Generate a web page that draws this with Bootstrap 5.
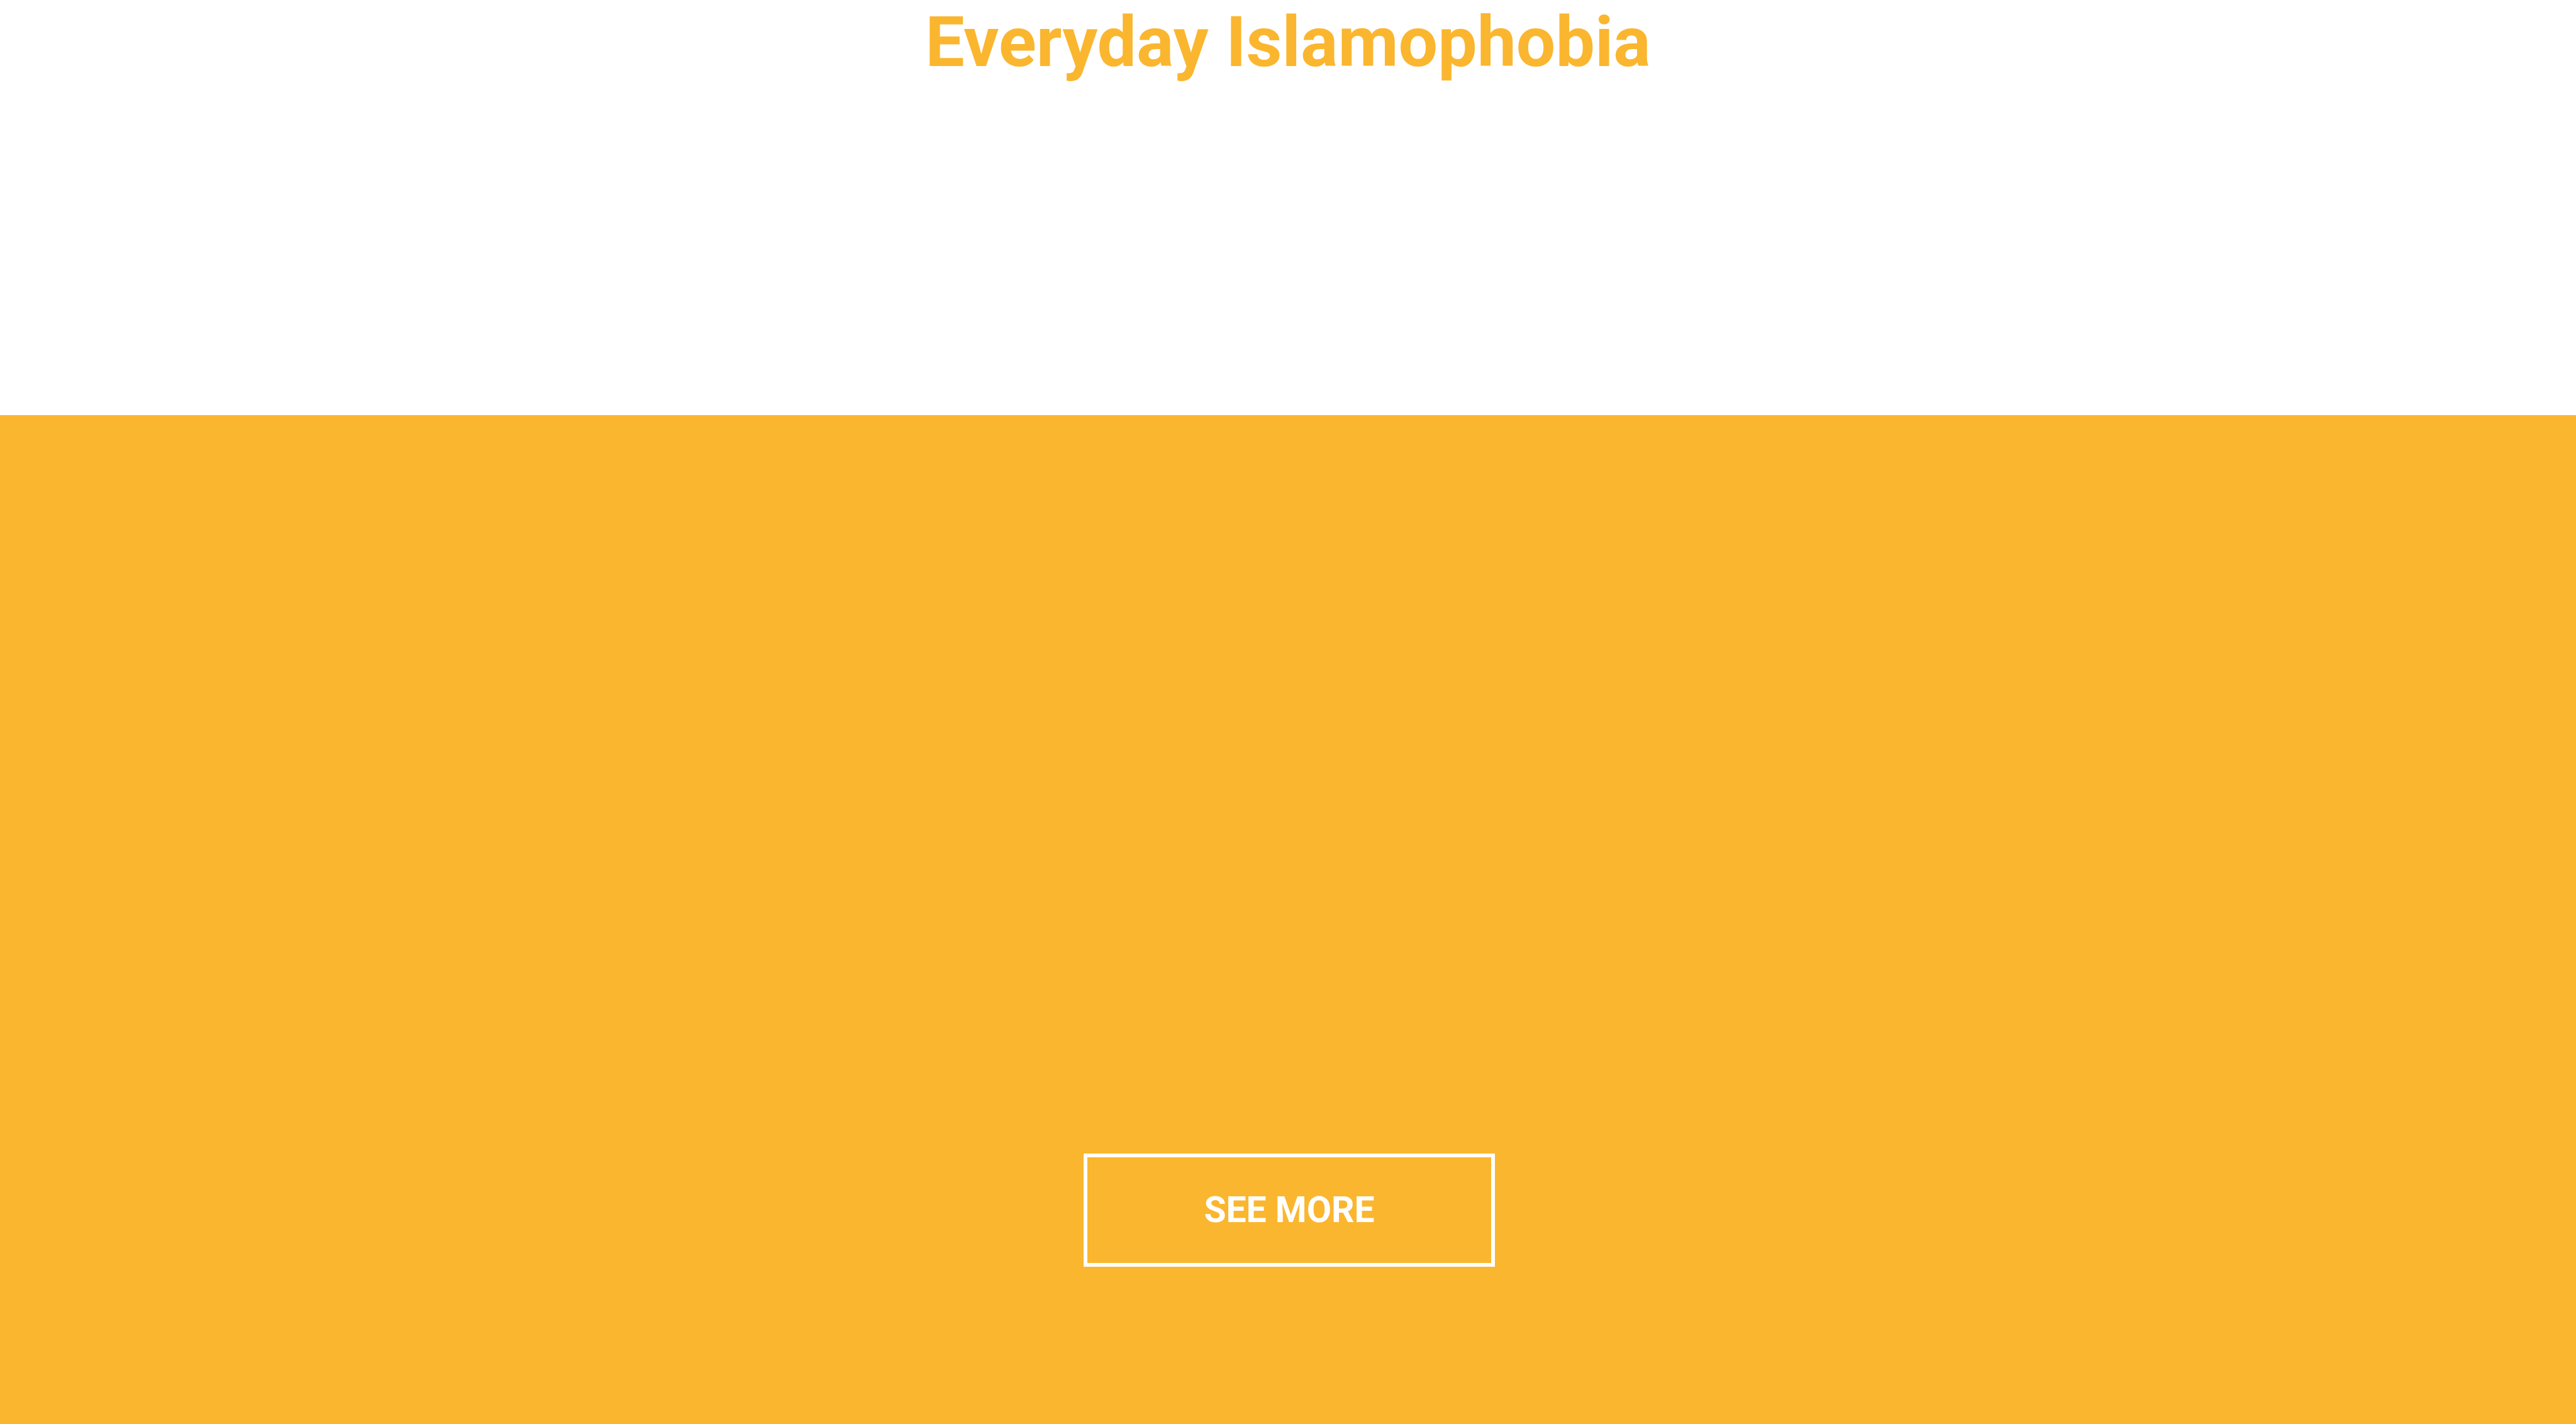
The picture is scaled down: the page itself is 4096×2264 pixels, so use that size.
<!DOCTYPE html>
<html lang="en">
<head>
<meta charset="utf-8">
<meta name="viewport" content="width=device-width, initial-scale=1">
<title>Everyday Islamophobia</title>
<link rel="stylesheet" href="https://cdn.jsdelivr.net/npm/bootstrap@5.3.0/dist/css/bootstrap.min.css">
<style>
:root { --brand: #fbb62f; }
body { font-family: Roboto, "Liberation Sans", sans-serif; }
.page-title { color: var(--brand); font-size: 111px; line-height: 134px; }
.page-head { padding-bottom: 526px; }
.brand-band { background-color: var(--brand); padding-bottom: 250px; }
.btn-more {
  --bs-btn-color: #fff;
  --bs-btn-border-color: #fff;
  --bs-btn-hover-color: var(--brand);
  --bs-btn-hover-bg: #fff;
  --bs-btn-hover-border-color: #fff;
  --bs-btn-border-width: 6px;
  --bs-btn-font-size: 57px;
  --bs-btn-line-height: 68px;
  --bs-btn-padding-x: 185px;
  --bs-btn-padding-y: 50px;
}
</style>
</head>
<body class="bg-white">
<div class="d-flex flex-column min-vh-100">
  <header class="page-head text-center">
    <h1 class="page-title fw-bold m-0">Everyday Islamophobia</h1>
  </header>
  <main class="brand-band flex-grow-1 d-flex align-items-end justify-content-center">
    <a href="#" class="btn btn-more rounded-0 fw-bold text-uppercase ms-1">See more</a>
  </main>
</div>
<script src="https://cdn.jsdelivr.net/npm/bootstrap@5.3.0/dist/js/bootstrap.bundle.min.js"></script>
</body>
</html>
